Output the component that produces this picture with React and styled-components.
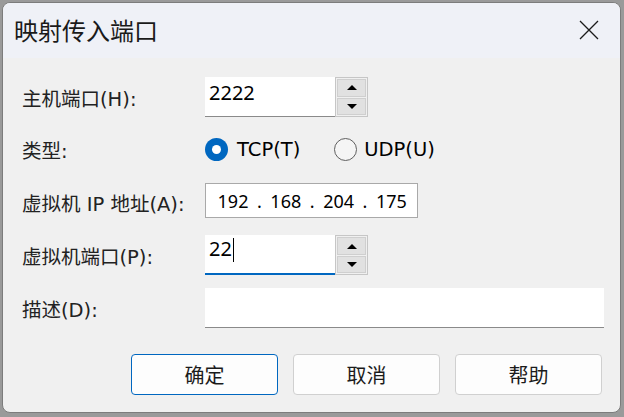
import React from "react";
import styled, { createGlobalStyle } from "styled-components";

const GlobalStyle = createGlobalStyle`
  html, body {
    margin: 0;
    padding: 0;
    width: 624px;
    height: 417px;
    overflow: hidden;
    background: #9a9a9a;
    font-family: "Noto Sans", "Noto Sans CJK SC", sans-serif;
  }
`;

const Screen = styled.div`
  width: 624px;
  height: 417px;
  padding: 2px 3px 4px 2px;
  box-sizing: border-box;
  display: flex;
`;

const Window = styled.div`
  flex: 1;
  display: flex;
  flex-direction: column;
  border: 1px solid #7c7c7c;
  border-radius: 8px;
  overflow: hidden;
  background: #f0f0f0;
`;

const TitleBar = styled.div`
  height: 55px;
  flex-shrink: 0;
  display: flex;
  align-items: center;
  justify-content: space-between;
  padding: 0 21px 0 11px;
  background: #eff1f7;
`;

const Title = styled.div`
  font-family: "Noto Sans CJK SC", sans-serif;
  font-size: 24px;
  color: #1a1a1a;
  margin-top: -2px;
`;

const CloseButton = styled.div`
  width: 20px;
  height: 20px;
  display: flex;
  margin-top: -2px;
`;

const Body = styled.div`
  flex: 1;
  padding: 19px 16px 0 19px;
  display: flex;
  flex-direction: column;
`;

const Form = styled.div`
  display: grid;
  grid-template-columns: 183px 1fr;
  grid-auto-rows: 40px;
  row-gap: 12.75px;
  align-items: center;
`;

const Label = styled.div`
  font-family: "DejaVu Sans", "Noto Sans CJK SC", sans-serif;
  font-size: 19.5px;
  color: #222;
  white-space: nowrap;
`;

const SpinRow = styled.div`
  display: flex;
  height: 40px;
`;

const Field = styled.div`
  width: ${(p) => p.$width || "130px"};
  height: 40px;
  box-sizing: border-box;
  background: #fff;
  border-bottom: ${(p) => (p.$focused ? "2px solid #0067c0" : "1px solid #8a8a8a")};
  padding: ${(p) => (p.$focused ? "0 4px" : "2px 4px")};
  font-family: "Noto Sans", sans-serif;
  font-size: 20px;
  line-height: 27px;
  color: #000;
  display: flex;
  align-items: flex-start;
`;

const Caret = styled.span`
  display: inline-block;
  width: 1px;
  height: 24px;
  margin: 3px 0 0 1px;
  background: #000;
`;

const Spinner = styled.div`
  width: 33px;
  box-sizing: border-box;
  border: 1px solid #c6c6c6;
  padding: 1px;
  display: flex;
  flex-direction: column;
  gap: 1px;
  background: #f0f0f0;
`;

const SpinButton = styled.div`
  flex: 1;
  background: #e1e1e1;
  border: 1px solid #cfcfcf;
  display: flex;
  align-items: center;
  justify-content: center;
`;

const Arrow = styled.span`
  width: 0;
  height: 0;
  border-left: 5px solid transparent;
  border-right: 5px solid transparent;
  ${(p) => (p.$down ? "border-top: 5px solid #000;" : "border-bottom: 5px solid #000;")}
`;

const RadioGroup = styled.div`
  display: flex;
  align-items: center;
  gap: 34px;
`;

const RadioOption = styled.div`
  display: flex;
  align-items: center;
  gap: ${(p) => (p.$checked ? "9px" : "7px")};
  font-family: "DejaVu Sans", sans-serif;
  font-size: 19.5px;
  color: #000;
`;

const RadioCircle = styled.span`
  width: 23px;
  height: 23px;
  box-sizing: border-box;
  border-radius: 50%;
  display: flex;
  align-items: center;
  justify-content: center;
  background: ${(p) => (p.$checked ? "#0067c0" : "#f5f5f5")};
  border: ${(p) => (p.$checked ? "none" : "1px solid #5f5f5f")};

  &::after {
    content: "";
    width: 9px;
    height: 9px;
    border-radius: 50%;
    background: #fff;
    display: ${(p) => (p.$checked ? "block" : "none")};
  }
`;

const IpBox = styled.div`
  width: 213px;
  height: 35px;
  margin-top: -4px;
  box-sizing: border-box;
  border: 1px solid #a9a9a9;
  background: #fff;
  padding-left: 7px;
  display: flex;
  align-items: center;
  font-family: "Noto Sans", sans-serif;
  font-size: 18px;
  color: #000;
`;

const Octet = styled.span`
  width: 40px;
  text-align: center;
`;

const Dot = styled.span`
  width: 12.8px;
  text-align: center;
`;

const Footer = styled.div`
  display: flex;
  justify-content: flex-end;
  gap: 15px;
  margin-top: 26px;
  padding-right: 2px;
`;

const Button = styled.div`
  width: 147px;
  height: 41px;
  box-sizing: border-box;
  border: 1px solid ${(p) => (p.$primary ? "#0067c0" : "#d0d0d0")};
  border-radius: 4px;
  background: #fdfdfd;
  display: flex;
  align-items: center;
  justify-content: center;
  font-family: "Noto Sans CJK SC", sans-serif;
  font-size: 20px;
  color: #1b1b1b;
`;

const Spin = () => (
  <Spinner>
    <SpinButton>
      <Arrow />
    </SpinButton>
    <SpinButton>
      <Arrow $down />
    </SpinButton>
  </Spinner>
);

export default function App() {
  const ip = ["192", "168", "204", "175"];
  return (
    <>
      <GlobalStyle />
      <Screen>
        <Window>
          <TitleBar>
            <Title>映射传入端口</Title>
            <CloseButton>
              <svg width="20" height="20" viewBox="0 0 20 20">
                <path d="M1 1 L19 19 M19 1 L1 19" stroke="#1b1b1b" strokeWidth="1.3" fill="none" />
              </svg>
            </CloseButton>
          </TitleBar>
          <Body>
            <Form>
              <Label>主机端口(H):</Label>
              <SpinRow>
                <Field>2222</Field>
                <Spin />
              </SpinRow>

              <Label>类型:</Label>
              <RadioGroup>
                <RadioOption $checked>
                  <RadioCircle $checked />
                  TCP(T)
                </RadioOption>
                <RadioOption>
                  <RadioCircle />
                  UDP(U)
                </RadioOption>
              </RadioGroup>

              <Label>虚拟机 IP 地址(A):</Label>
              <IpBox>
                {ip.map((o, i) => (
                  <React.Fragment key={i}>
                    <Octet>{o}</Octet>
                    {i < ip.length - 1 && <Dot>.</Dot>}
                  </React.Fragment>
                ))}
              </IpBox>

              <Label>虚拟机端口(P):</Label>
              <SpinRow>
                <Field $focused>
                  22
                  <Caret />
                </Field>
                <Spin />
              </SpinRow>

              <Label>描述(D):</Label>
              <Field $width="100%" />
            </Form>
            <Footer>
              <Button $primary>确定</Button>
              <Button>取消</Button>
              <Button>帮助</Button>
            </Footer>
          </Body>
        </Window>
      </Screen>
    </>
  );
}
